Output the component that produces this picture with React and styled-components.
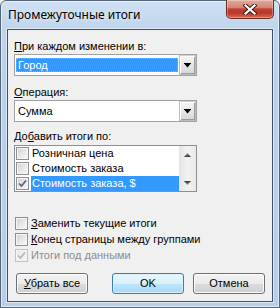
import React from 'react';
import styled, { createGlobalStyle } from 'styled-components';

const Global = createGlobalStyle`
  html, body { margin: 0; padding: 0; background: #ffffff; }
  body { width: 280px; height: 308px; overflow: hidden; }
`;

const Window = styled.div`
  box-sizing: border-box;
  width: 280px;
  height: 308px;
  border: 1px solid #55667a;
  border-radius: 6px 6px 0 0;
  background: linear-gradient(180deg, #cfe0f3 0px, #bfd5ed 26px, #b9d1ea 60px, #b6cee8 100%);
  box-shadow: inset 0 0 0 1px rgba(255, 255, 255, 0.55);
  display: flex;
  flex-direction: column;
  font-family: "Liberation Sans", Arial, sans-serif;
  font-size: 11px;
  color: #000;
`;

const TitleBar = styled.div`
  height: 28px;
  flex: none;
  display: flex;
  align-items: flex-start;
  padding-left: 7px;
`;

const Title = styled.div`
  font-family: "Noto Sans", "Segoe UI", sans-serif;
  font-size: 12px;
  line-height: 16px;
  margin-top: 6px;
  color: #000;
  text-shadow: 0 0 6px rgba(255, 255, 255, 0.9);
`;

const CloseButton = styled.div`
  box-sizing: border-box;
  margin-left: auto;
  margin-right: 5px;
  margin-top: -1px;
  width: 48px;
  height: 19px;
  border: 1px solid #6e2d24;
  border-top: none;
  border-radius: 0 0 5px 5px;
  background: linear-gradient(180deg, #e2aa9c 0%, #d28576 42%, #c2402f 50%, #b8372a 72%, #d46a50 100%);
  box-shadow: inset 0 0 0 1px rgba(255, 255, 255, 0.3);
  display: flex;
  align-items: center;
  justify-content: center;
`;

const Frame = styled.div`
  flex: 1;
  display: flex;
  padding: 0 6px 5px 6px;
`;

const Client = styled.div`
  flex: 1;
  display: flex;
  flex-direction: column;
  border: 1px solid #3e5168;
  background: #f0f0f0;
  box-shadow: 0 0 0 1px rgba(255, 255, 255, 0.5);
  padding: 10px 7px 7px 6px;
`;

const FieldLabel = styled.div`
  line-height: 13px;
  height: 13px;
  margin-top: ${(p) => p.$top || 0}px;
  white-space: nowrap;
`;

const Key = styled.span`
  text-decoration: underline;
  text-underline-offset: 1px;
`;

const Combo = styled.div`
  box-sizing: border-box;
  width: 183px;
  height: 22px;
  margin-top: 1px;
  border: 1px solid #a2a2a2;
  background: #fff;
  display: flex;
  align-items: stretch;
`;

const ComboField = styled.div`
  box-sizing: border-box;
  flex: 1;
  height: 14px;
  align-self: center;
  margin: 0 1px;
  padding-left: 1px;
  line-height: 12px;
  background: ${(p) => (p.$selected ? '#3399ff' : 'transparent')};
  color: ${(p) => (p.$selected ? '#fff' : '#000')};
  border: 1px ${(p) => (p.$selected ? 'dotted #d9a35a' : 'solid transparent')};
`;

const ArrowButton = styled.div`
  width: 17px;
  flex: none;
  background: linear-gradient(180deg, #f6f6f6 0%, #e6e6e6 50%, #d6d6d6 100%);
  box-shadow: inset 1px 1px 0 #ffffff, inset -1px -1px 0 #9c9c9c;
  border: 1px solid #bdbdbd;
  border-top-color: #d0d0d0;
  box-sizing: border-box;
  display: flex;
  align-items: center;
  justify-content: center;
`;

const ListBox = styled.div`
  box-sizing: border-box;
  width: 183px;
  height: 47px;
  margin-top: 2px;
  border: 1px solid #8b8f96;
  background: #fff;
  display: flex;
`;

const Rows = styled.div`
  flex: 1;
  display: flex;
  flex-direction: column;
`;

const ListRow = styled.div`
  height: 15px;
  display: flex;
  align-items: center;
  padding-left: 1px;
`;

const RowText = styled.div`
  flex: 1;
  height: 15px;
  line-height: 15px;
  margin-left: 2px;
  padding-left: 1px;
  white-space: nowrap;
  background: ${(p) => (p.$selected ? '#3399ff' : 'transparent')};
  color: ${(p) => (p.$selected ? '#fff' : '#000')};
`;

const Scrollbar = styled.div`
  width: 17px;
  flex: none;
  background: linear-gradient(90deg, #e4e4e4, #f2f2f2 50%, #e9e9e9);
  display: flex;
  flex-direction: column;
  justify-content: space-between;
`;

const ScrollButton = styled.div`
  height: 17px;
  display: flex;
  align-items: center;
  justify-content: center;
`;

const Box = styled.div`
  box-sizing: border-box;
  width: 13px;
  height: 13px;
  flex: none;
  border: 1px solid ${(p) => (p.$disabled ? '#c2c2c2' : '#8e8f8f')};
  background: ${(p) =>
    p.$disabled
      ? 'linear-gradient(135deg, #e6e6e6, #f7f7f7)'
      : 'linear-gradient(135deg, #cfd1d4 0%, #e8e8e8 55%, #f9f9f9 100%)'};
  box-shadow: inset 0 0 0 1px #f4f4f4;
  display: flex;
  align-items: center;
  justify-content: center;
`;

const CheckList = styled.div`
  margin-top: 23px;
  display: flex;
  flex-direction: column;
`;

const CheckRow = styled.div`
  height: 16px;
  display: flex;
  align-items: center;
  margin-left: 1px;
  color: ${(p) => (p.$disabled ? '#8d8d8d' : '#000')};
`;

const CheckText = styled.span`
  margin-left: 3px;
  white-space: nowrap;
`;

const ButtonRow = styled.div`
  margin-top: 10px;
  display: flex;
  align-items: center;
  padding-left: 2px;
`;

const Buttons = styled.div`
  margin-left: auto;
  display: flex;
  gap: 9px;
`;

const Button = styled.div`
  box-sizing: border-box;
  width: 72px;
  height: 21px;
  border-radius: 3px;
  border: 1px solid ${(p) => (p.$default ? '#3c7fb1' : '#707070')};
  background: ${(p) =>
    p.$default
      ? 'linear-gradient(180deg, #eaf6fd 0%, #d9f0fc 50%, #bee6fd 50%, #a7d9f5 100%)'
      : 'linear-gradient(180deg, #f2f2f2 0%, #ebebeb 50%, #dddddd 50%, #cfcfcf 100%)'};
  box-shadow: inset 0 0 0 1px ${(p) => (p.$default ? '#d8effc' : '#fbfbfb')};
  display: flex;
  align-items: center;
  justify-content: center;
  line-height: 13px;
`;

const DownArrow = () => (
  <svg width="7" height="5" viewBox="0 0 7 5">
    <rect x="0" y="0" width="7" height="1" fill="#000" />
    <polygon points="0.5,1 6.5,1 3.5,4.5" fill="#000" />
  </svg>
);

const ScrollArrow = ({ up }) => (
  <svg width="7" height="4" viewBox="0 0 7 4">
    <defs>
      <linearGradient id={up ? 'ga' : 'gb'} x1="0" y1="0" x2="0" y2="1">
        <stop offset="0" stopColor={up ? '#9a9a9a' : '#333'} />
        <stop offset="1" stopColor={up ? '#333' : '#9a9a9a'} />
      </linearGradient>
    </defs>
    <polygon points={up ? '3.5,0 7,4 0,4' : '0,0 7,0 3.5,4'} fill={`url(#${up ? 'ga' : 'gb'})`} />
  </svg>
);

const Check = ({ disabled }) => (
  <svg width="9" height="9" viewBox="0 0 9 9">
    <path
      d="M1 4.5 L3.5 7 L8 1.5"
      fill="none"
      stroke={disabled ? '#b4b4b4' : '#4d6185'}
      strokeWidth="1.6"
    />
  </svg>
);

const CloseGlyph = () => (
  <svg width="14" height="11" viewBox="0 0 14 11">
    <path d="M2.5 1.5 L11.5 9.5 M11.5 1.5 L2.5 9.5" stroke="#3b1712" strokeWidth="4" strokeLinecap="square" />
    <path d="M2.5 1.5 L11.5 9.5 M11.5 1.5 L2.5 9.5" stroke="#ffffff" strokeWidth="2.2" strokeLinecap="square" />
  </svg>
);

const listItems = [
  { label: 'Розничная цена', checked: false },
  { label: 'Стоимость заказа', checked: false },
  { label: 'Стоимость заказа, $', checked: true, selected: true },
];

export default function App() {
  return (
    <>
      <Global />
      <Window>
        <TitleBar>
          <Title>Промежуточные итоги</Title>
          <CloseButton>
            <CloseGlyph />
          </CloseButton>
        </TitleBar>
        <Frame>
          <Client>
            <FieldLabel>
              <Key>П</Key>ри каждом изменении в:
            </FieldLabel>
            <Combo>
              <ComboField $selected>Город</ComboField>
              <ArrowButton>
                <DownArrow />
              </ArrowButton>
            </Combo>

            <FieldLabel $top={10}>
              <Key>О</Key>перация:
            </FieldLabel>
            <Combo>
              <ComboField>Сумма</ComboField>
              <ArrowButton>
                <DownArrow />
              </ArrowButton>
            </Combo>

            <FieldLabel $top={8}>
              До<Key>б</Key>авить итоги по:
            </FieldLabel>
            <ListBox>
              <Rows>
                {listItems.map((it) => (
                  <ListRow key={it.label}>
                    <Box>{it.checked && <Check />}</Box>
                    <RowText $selected={it.selected}>{it.label}</RowText>
                  </ListRow>
                ))}
              </Rows>
              <Scrollbar>
                <ScrollButton>
                  <ScrollArrow up />
                </ScrollButton>
                <ScrollButton>
                  <ScrollArrow />
                </ScrollButton>
              </Scrollbar>
            </ListBox>

            <CheckList>
              <CheckRow>
                <Box />
                <CheckText>
                  <Key>З</Key>аменить текущие итоги
                </CheckText>
              </CheckRow>
              <CheckRow>
                <Box />
                <CheckText>
                  <Key>К</Key>онец страницы между группами
                </CheckText>
              </CheckRow>
              <CheckRow $disabled>
                <Box $disabled>
                  <Check disabled />
                </Box>
                <CheckText>Итоги под данными</CheckText>
              </CheckRow>
            </CheckList>

            <ButtonRow>
              <Button>
                <span>
                  <Key>У</Key>брать все
                </span>
              </Button>
              <Buttons>
                <Button $default>OK</Button>
                <Button>Отмена</Button>
              </Buttons>
            </ButtonRow>
          </Client>
        </Frame>
      </Window>
    </>
  );
}
